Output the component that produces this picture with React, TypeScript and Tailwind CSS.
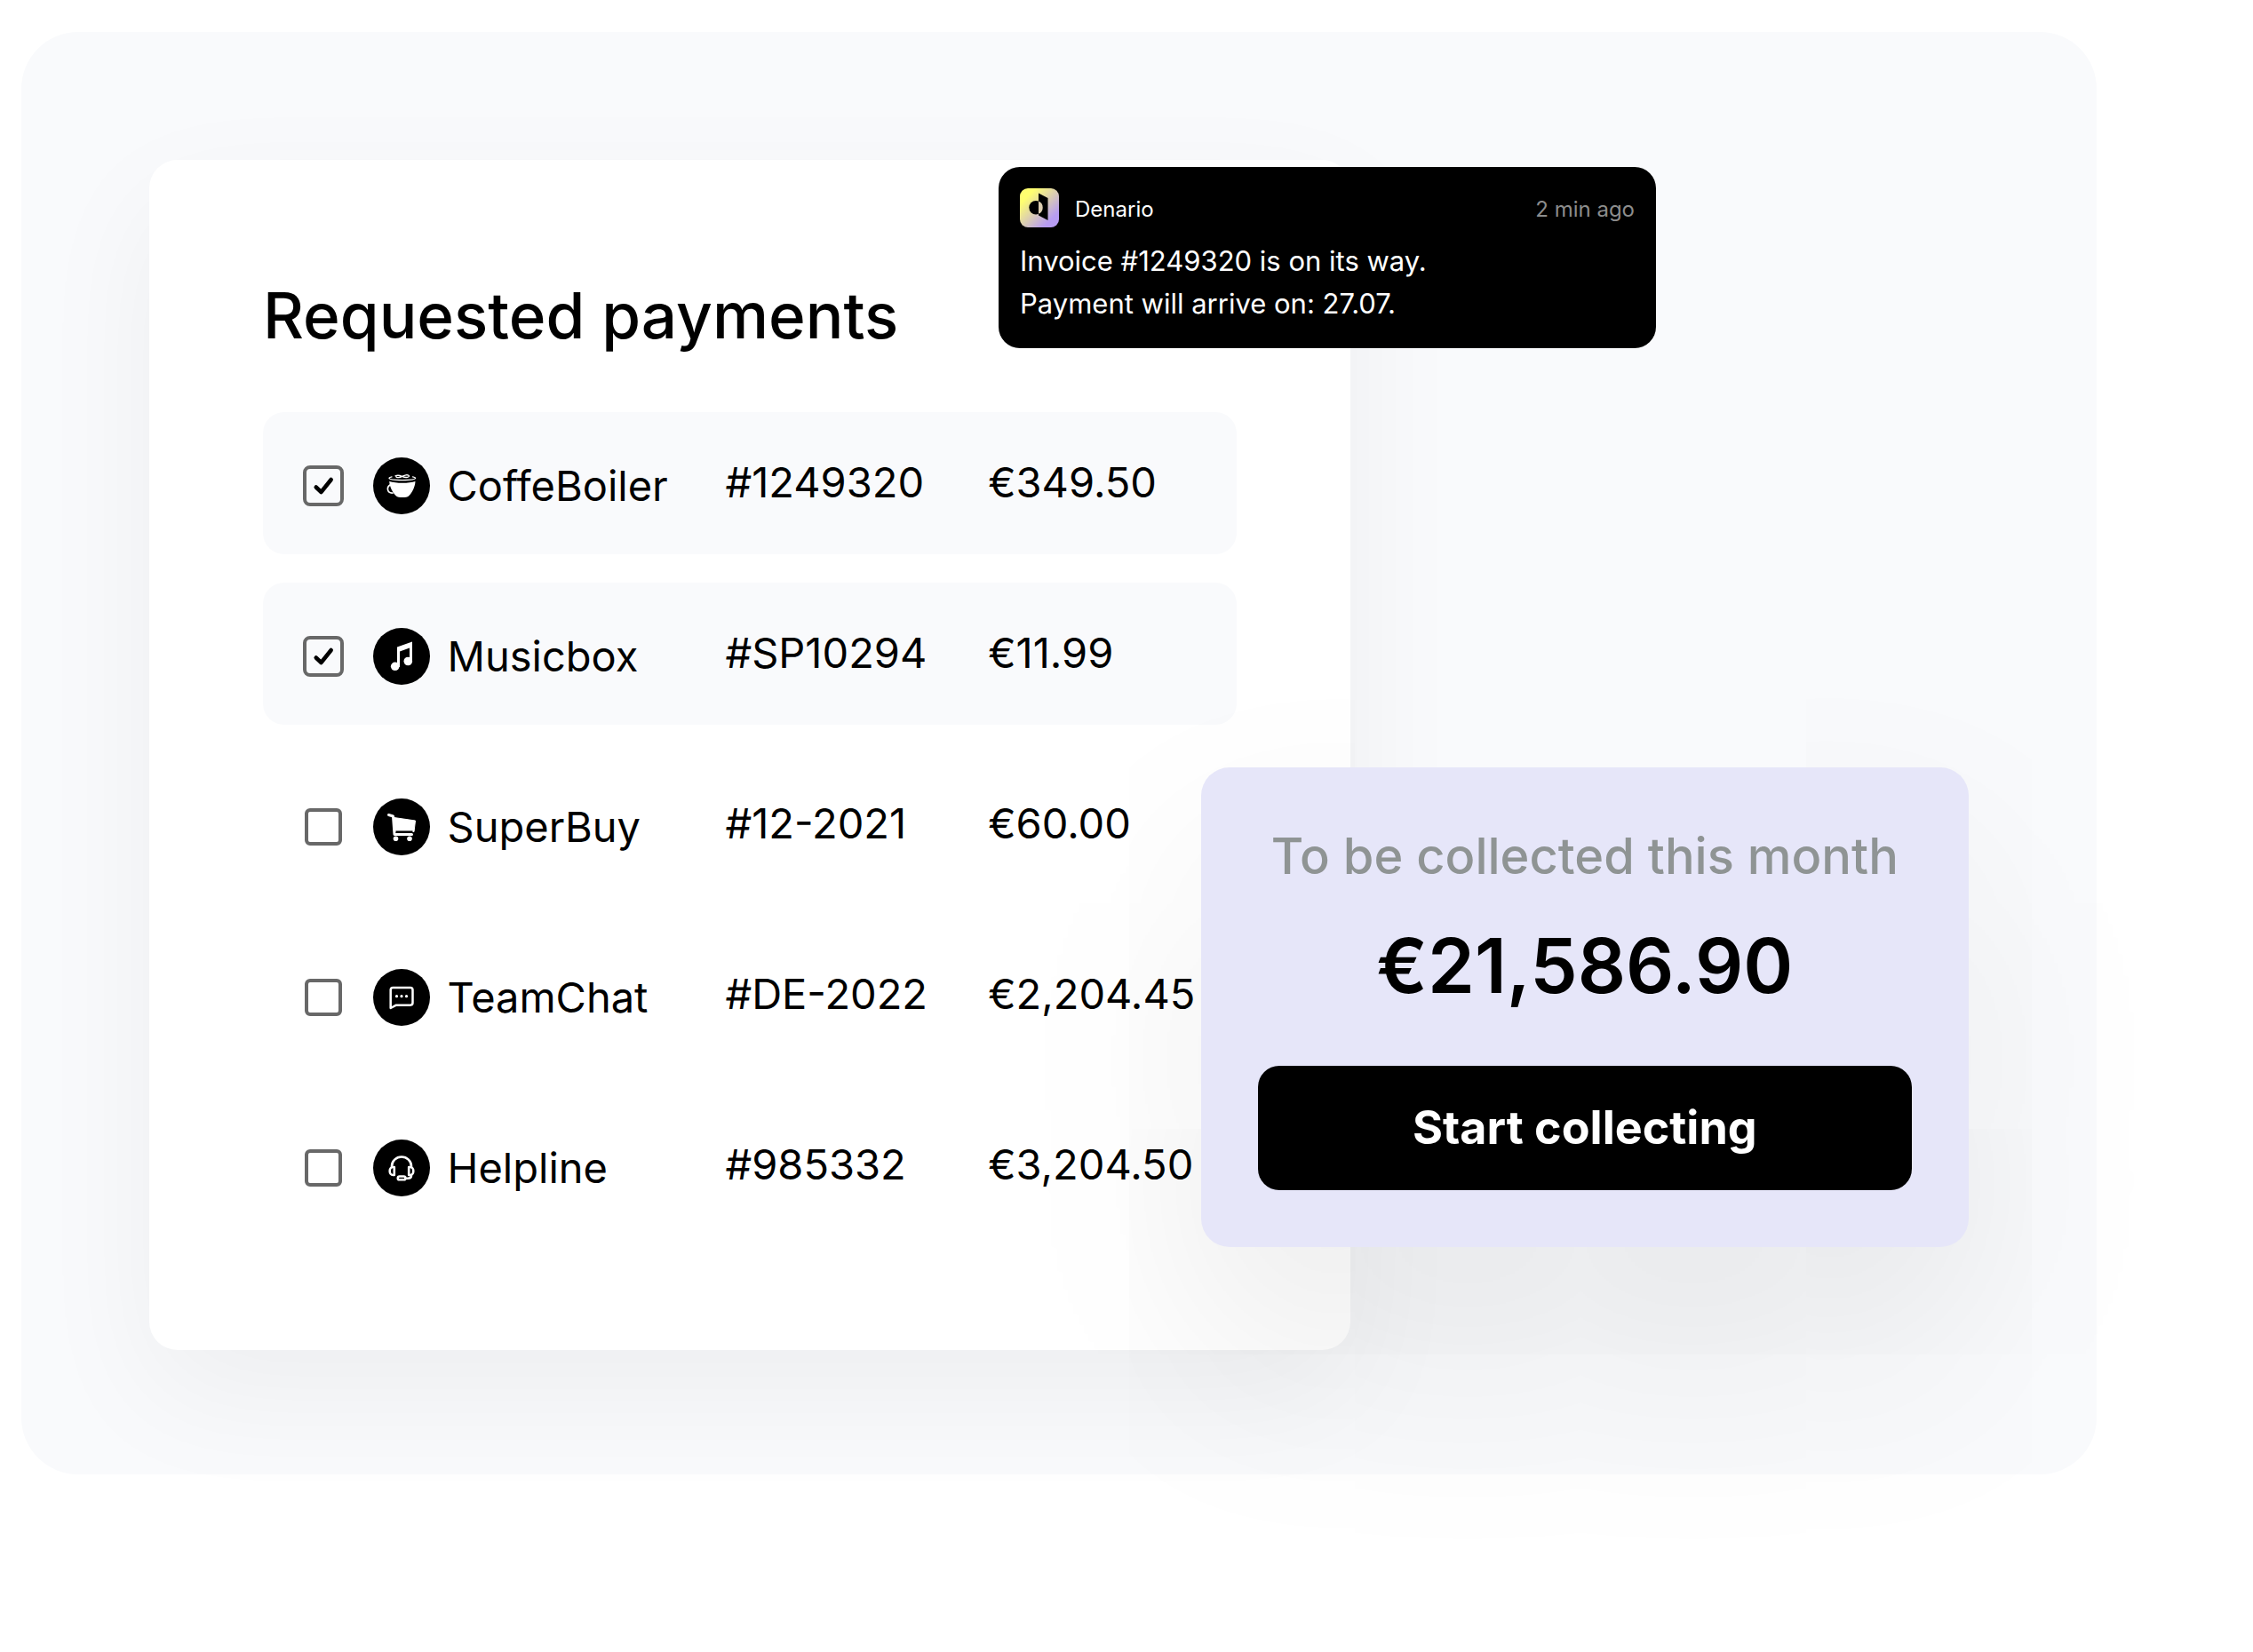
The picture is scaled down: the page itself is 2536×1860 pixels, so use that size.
import React from "react";

interface Payment {
  name: string;
  invoice: string;
  amount: string;
  selected: boolean;
  icon: React.ReactNode;
}

const payments: Payment[] = [
  {
    name: "CoffeBoiler",
    invoice: "#1249320",
    amount: "€349.50",
    selected: true,
    icon: (
      <g fill="none" stroke="#fff" strokeLinecap="round">
        <path d="M21 21.8c-2 .4-3 .8-3 1.500 0 1.500 6.500 2.300 14.800 2.300s14.800-.8 14.800-2.300c0-.7-1-1.100-3-1.500" strokeWidth="1.300" />
        <path d="M25 20.800c2.500-1 5-.6 7.500.5s6 1.400 7.500.4c1.300-1-.4-2.200-3-1.900-3.500.4-4.500 2.700-8.500 2.900-1.800.1-3-.5-2.500-1.100" strokeWidth="1.300" />
        <path d="M18.200 27c4 1.400 9 1.700 14.800 1.700s10.800-.3 14.500-1.700c-.4 6.500-3.500 12.500-7.500 16.500-2 2-12 2-14 0-4-4-7.400-10-7.800-16.500z" fill="#fff" stroke="none" />
        <path d="M19 31c-4 2.500-3.500 9.500 3 9" strokeWidth="1.700" />
      </g>
    ),
  },
  {
    name: "Musicbox",
    invoice: "#SP10294",
    amount: "€11.99",
    selected: true,
    icon: (
      <g fill="#fff">
        <path d="M27 21.500 44 15.500V38h-3V22.500l-11 4V44h-3z" />
        <circle cx="24.700" cy="43.300" r="4.800" />
        <circle cx="39.300" cy="37.500" r="4.800" />
      </g>
    ),
  },
  {
    name: "SuperBuy",
    invoice: "#12-2021",
    amount: "€60.00",
    selected: false,
    icon: (
      <>
        <path d="M17.500 18.500 22.500 20 24 40.500H43.500" fill="none" stroke="#fff" strokeWidth="3" strokeLinecap="round" strokeLinejoin="round" />
        <path d="M23.500 21.500 47.500 25l-1.500 12.500H24z" fill="#fff" stroke="#fff" strokeLinejoin="round" />
        <path d="M25.500 37.300H44.500" stroke="#000" strokeWidth="1.700" />
        <circle cx="25.500" cy="45.200" r="2.800" fill="#fff" />
        <circle cx="41" cy="45.200" r="2.800" fill="#fff" />
      </>
    ),
  },
  {
    name: "TeamChat",
    invoice: "#DE-2022",
    amount: "€2,204.45",
    selected: false,
    icon: (
      <>
        <path
          d="M19.700 44V23.500a2.600 2.600 0 0 1 2.600-2.600h19.600a2.600 2.600 0 0 1 2.600 2.600v14.600a2.600 2.600 0 0 1-2.600 2.600H26z"
          fill="none"
          stroke="#fff"
          strokeWidth="2.500"
          strokeLinejoin="round"
        />
        <g fill="#fff">
          <circle cx="26.500" cy="30.700" r="1.600" />
          <circle cx="32" cy="30.700" r="1.600" />
          <circle cx="37.500" cy="30.700" r="1.600" />
        </g>
      </>
    ),
  },
  {
    name: "Helpline",
    invoice: "#985332",
    amount: "€3,204.50",
    selected: false,
    icon: (
      <g fill="none" stroke="#fff" strokeWidth="2.600" strokeLinecap="round" strokeLinejoin="round">
        <path d="M21 31v-1a11 10.500 0 0 1 22 0v1" />
        <path d="M23.800 31v9h-1.500c-2 0-3.600-2-3.600-4.500s1.600-4.500 3.600-4.500z" />
        <path d="M40.200 31v9h1.500c2 0 3.600-2 3.600-4.500s-1.600-4.500-3.600-4.500z" />
        <path d="M43 40.500c0 2-1.500 3.200-4 3.200h-2" />
        <rect x="27.800" y="41.500" width="8.600" height="3.800" rx="1.900" />
      </g>
    ),
  },
];

function PaymentRow({ payment }: { payment: Payment }) {
  const [selected, setSelected] = React.useState<boolean>(payment.selected);
  const id = `select-${payment.name}`;
  const bg = selected ? "bg-[#f9fafc]" : "";

  return (
    <tr className="h-40">
      <td className={`w-[11%] rounded-l-3xl pl-11 pt-1.5 ${bg}`}>
        <span className="relative flex size-12 items-center justify-center">
          <input
            id={id}
            type="checkbox"
            checked={selected}
            onChange={() => setSelected(!selected)}
            className="size-[42px] appearance-none rounded-md border-4 border-[#686868] checked:size-[46px] checked:rounded-lg"
          />
          {selected && (
            <svg viewBox="0 0 48 48" className="pointer-events-none absolute inset-0 size-full">
              <path d="M15.700 25.500 21.500 31 32.700 17" fill="none" stroke="#000" strokeWidth="4.500" strokeLinecap="round" strokeLinejoin="round" />
            </svg>
          )}
        </span>
      </td>
      <td className={`w-[36.5%] pl-[3px] pt-1.5 ${bg}`}>
        <label htmlFor={id} className="flex items-center gap-5">
          <svg viewBox="0 0 64 64" className="size-16">
            <circle cx="32" cy="32" r="32" />
            {payment.icon}
          </svg>
          {payment.name}
        </label>
      </td>
      <td className={`w-[27%] pb-0.5 ${bg}`}>{payment.invoice}</td>
      <td className={`rounded-r-3xl pb-0.5 ${bg}`}>{payment.amount}</td>
    </tr>
  );
}

function Notification() {
  return (
    <div className="absolute left-[1100px] top-[152px] w-[740px] rounded-3xl bg-black px-6 pb-[26px] pt-6 text-white">
      <div className="flex h-11 items-end text-2xl">
        <svg viewBox="0 0 44 44" className="size-11">
          <defs>
            <linearGradient id="logo" x1="0" y1="0" x2="1" y2="1">
              <stop offset="0.200" stopColor="#ffff70" />
              <stop offset="0.800" stopColor="#b79cf2" />
            </linearGradient>
          </defs>
          <rect width="44" height="44" rx="9" fill="url(#logo)" />
          <path d="M21 5.500 31.500 11v25L21 30.500z" />
          <circle cx="18" cy="21.700" r="7.700" />
          <path d="M21 14.600a7.700 7.700 0 0 1 0 14.200z" fill="#dccdb0" />
        </svg>
        <p className="ml-[18px] leading-10">Denario</p>
        <p className="ml-auto leading-10 text-[#8c8c8c]">2 min ago</p>
      </div>
      <p className="mt-3.5 text-[31px] leading-[48px]">
        Invoice #1249320 is on its way.
        <br />
        Payment will arrive on: 27.07.
      </p>
    </div>
  );
}

function CollectCard() {
  return (
    <div className="absolute right-36 top-[828px] w-[37%] rounded-[32px] bg-[#e6e6f9] p-16 text-center shadow-[0_120px_280px_rgba(0,0,0,0.085)]">
      <p className="text-[56px] font-medium leading-[72px] text-[#8f9494]">To be collected this month</p>
      <p className="mt-8 text-[85px] font-semibold leading-[112px]">€21,586.90</p>
      <button type="button" className="mt-14 h-[140px] w-full rounded-3xl bg-black text-[52px] font-bold text-white">
        Start collecting
      </button>
    </div>
  );
}

export default function App() {
  return (
    <div className="min-h-screen overflow-hidden bg-white pb-[200px] pl-6 pr-44 pt-9 font-[Inter,sans-serif] text-black">
      <main className="relative rounded-[64px] bg-[#f9fafc] px-36 pb-[140px] pt-36">
        <section className="w-[66%] rounded-[32px] bg-white px-32 pb-24 pt-32 shadow-[0_50px_140px_rgba(0,0,0,0.05)]">
          <h1 className="text-[71px] font-medium leading-[94px]">Requested payments</h1>
          <table className="mt-[30px] w-full table-fixed border-separate border-spacing-x-0 border-spacing-y-8 text-left text-[47px]">
            <tbody>
              {payments.map((payment) => (
                <PaymentRow key={payment.name} payment={payment} />
              ))}
            </tbody>
          </table>
        </section>
        <Notification />
        <CollectCard />
      </main>
    </div>
  );
}
